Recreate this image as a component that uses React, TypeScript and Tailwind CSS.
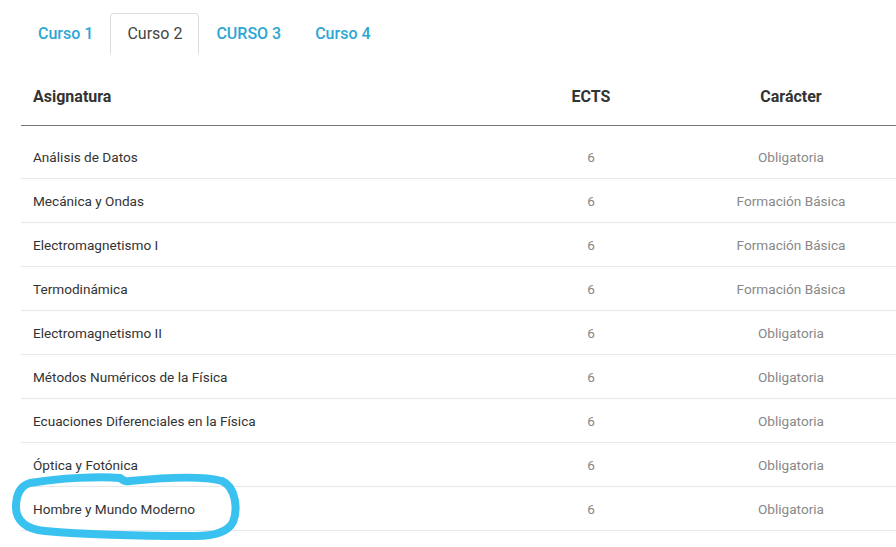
const tabs = [
  { label: "Curso 1", active: false },
  { label: "Curso 2", active: true },
  { label: "CURSO 3", active: false },
  { label: "Curso 4", active: false },
];

const rows: [string, number, string][] = [
  ["Análisis de Datos", 6, "Obligatoria"],
  ["Mecánica y Ondas", 6, "Formación Básica"],
  ["Electromagnetismo I", 6, "Formación Básica"],
  ["Termodinámica", 6, "Formación Básica"],
  ["Electromagnetismo II", 6, "Obligatoria"],
  ["Métodos Numéricos de la Física", 6, "Obligatoria"],
  ["Ecuaciones Diferenciales en la Física", 6, "Obligatoria"],
  ["Óptica y Fotónica", 6, "Obligatoria"],
  ["Hombre y Mundo Moderno", 6, "Obligatoria"],
];

export default function App() {
  return (
    <div className="relative w-[896px] h-[547px] overflow-hidden bg-white font-['Roboto',sans-serif]">
      {/* tabs */}
      <div className="flex pl-[21px] pt-[13px]">
        {tabs.map((t) => (
          <div
            key={t.label}
            className={
              t.active
                ? "h-[41px] px-[16px] flex items-center border border-b-0 border-[#dedede] rounded-t-[4px] text-[16px] text-[#444]"
                : "h-[41px] px-[16px] flex items-center border border-transparent text-[16px] font-medium text-[#2ea6d3]"
            }
          >
            {t.label}
          </div>
        ))}
      </div>

      {/* table */}
      <div className="ml-[21px] mt-[13px]">
        <div className="grid grid-cols-[470px_200px_200px] h-[59px] items-center border-b border-[#777] text-[16px] font-bold text-[#333]">
          <div className="pl-[12px] pt-[1px]">Asignatura</div>
          <div className="text-center pt-[1px]">ECTS</div>
          <div className="text-center pt-[1px]">Carácter</div>
        </div>
        <div className="pt-[9px]">
          {rows.map(([name, ects, kind]) => (
            <div
              key={name}
              className="grid grid-cols-[470px_200px_200px] h-[44px] items-center border-b border-[#e8e8e8] text-[13.6px]"
            >
              <div className="pl-[12px] pt-[1px] text-[#333]">{name}</div>
              <div className="text-center pt-[1px] text-[#888]">{ects}</div>
              <div className="text-center pt-[1px] text-[#888]">{kind}</div>
            </div>
          ))}
        </div>
      </div>

      {/* hand-drawn highlight */}
      <svg className="absolute left-0 top-0 pointer-events-none" width="896" height="547">
        <path
          d="M30 483 C60 478 100 476 120 478 C124 481 126 482 130 481 C160 478 200 475 222 481 C236 487 238 510 233 522 C228 532 215 536 195 536 C150 536 90 535 45 531 C25 529 16 520 16 507 C16 494 20 486 30 483 Z"
          fill="none"
          stroke="#39c1ef"
          strokeWidth="8"
          strokeLinejoin="round"
        />
      </svg>
    </div>
  );
}
